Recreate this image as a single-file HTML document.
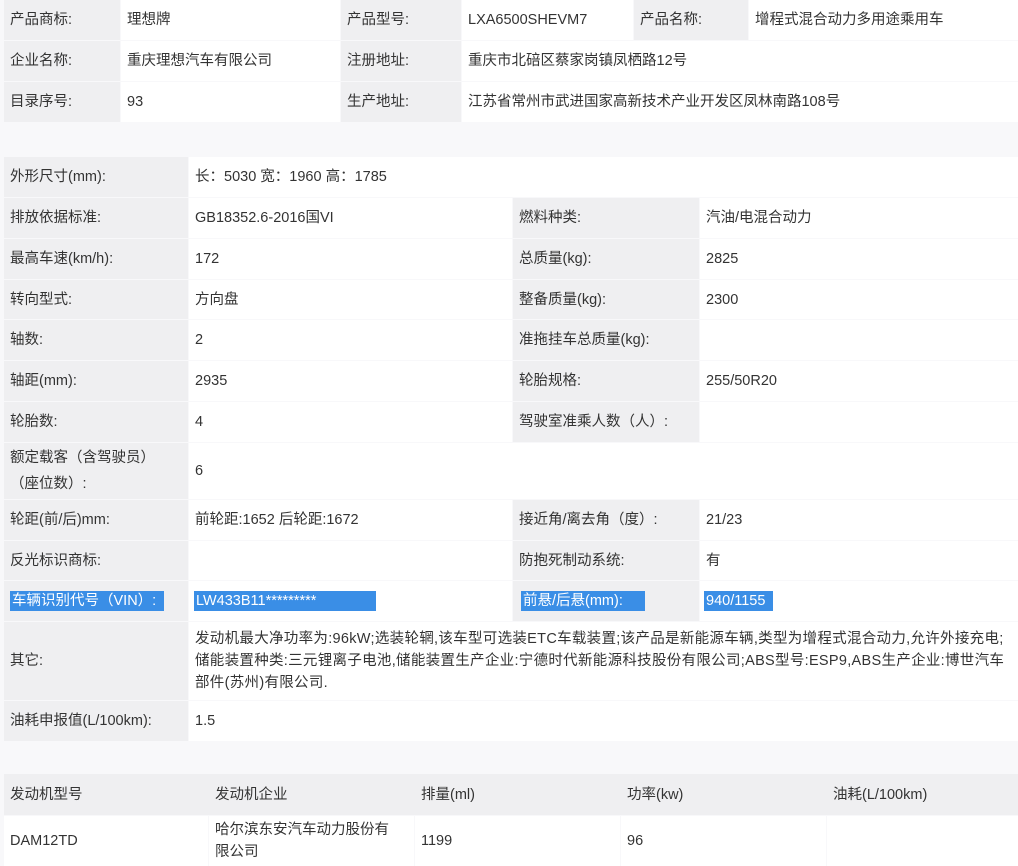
<!DOCTYPE html><html><head><meta charset="utf-8"><style>
body{margin:0;width:1018px;height:866px;background:#f8f8fa;position:relative;overflow:hidden;font-family:"Liberation Sans","Noto Sans CJK SC",sans-serif;font-size:14.5px;color:#333}
.c{position:absolute;box-sizing:border-box;padding-left:6px;display:flex;align-items:center;line-height:26px}
.l{background:#efeff1}.v{background:#fff}
.h{background:#3a8ee6;color:#fff;line-height:20px;padding:0 2px}
</style></head><body>
<div class="c l" style="left:4px;top:0;width:116px;height:40px">产品商标:</div>
<div class="c v" style="left:121px;top:0;width:219px;height:40px">理想牌</div>
<div class="c l" style="left:341px;top:0;width:120px;height:40px">产品型号:</div>
<div class="c v" style="left:462px;top:0;width:171px;height:40px">LXA6500SHEVM7</div>
<div class="c l" style="left:634px;top:0;width:114px;height:40px">产品名称:</div>
<div class="c v" style="left:749px;top:0;width:269px;height:40px">增程式混合动力多用途乘用车</div>
<div class="c l" style="left:4px;top:41px;width:116px;height:40px">企业名称:</div>
<div class="c v" style="left:121px;top:41px;width:219px;height:40px">重庆理想汽车有限公司</div>
<div class="c l" style="left:341px;top:41px;width:120px;height:40px">注册地址:</div>
<div class="c v" style="left:462px;top:41px;width:556px;height:40px">重庆市北碚区蔡家岗镇凤栖路12号</div>
<div class="c l" style="left:4px;top:82px;width:116px;height:40px">目录序号:</div>
<div class="c v" style="left:121px;top:82px;width:219px;height:40px">93</div>
<div class="c l" style="left:341px;top:82px;width:120px;height:40px">生产地址:</div>
<div class="c v" style="left:462px;top:82px;width:556px;height:40px">江苏省常州市武进国家高新技术产业开发区凤林南路108号</div>

<div class="c l" style="left:4px;top:157px;width:184px;height:40px">外形尺寸(mm):</div>
<div class="c v" style="left:189px;top:157px;width:829px;height:40px">长：5030 宽：1960 高：1785</div>

<div class="c l" style="left:4px;top:198px;width:184px;height:40px">排放依据标准:</div>
<div class="c v" style="left:189px;top:198px;width:323px;height:40px">GB18352.6-2016国VI</div>
<div class="c l" style="left:513px;top:198px;width:186px;height:40px">燃料种类:</div>
<div class="c v" style="left:700px;top:198px;width:318px;height:40px">汽油/电混合动力</div>

<div class="c l" style="left:4px;top:239px;width:184px;height:40px">最高车速(km/h):</div>
<div class="c v" style="left:189px;top:239px;width:323px;height:40px">172</div>
<div class="c l" style="left:513px;top:239px;width:186px;height:40px">总质量(kg):</div>
<div class="c v" style="left:700px;top:239px;width:318px;height:40px">2825</div>

<div class="c l" style="left:4px;top:280px;width:184px;height:39px">转向型式:</div>
<div class="c v" style="left:189px;top:280px;width:323px;height:39px">方向盘</div>
<div class="c l" style="left:513px;top:280px;width:186px;height:39px">整备质量(kg):</div>
<div class="c v" style="left:700px;top:280px;width:318px;height:39px">2300</div>

<div class="c l" style="left:4px;top:320px;width:184px;height:40px">轴数:</div>
<div class="c v" style="left:189px;top:320px;width:323px;height:40px">2</div>
<div class="c l" style="left:513px;top:320px;width:186px;height:40px">准拖挂车总质量(kg):</div>
<div class="c v" style="left:700px;top:320px;width:318px;height:40px"></div>

<div class="c l" style="left:4px;top:361px;width:184px;height:40px">轴距(mm):</div>
<div class="c v" style="left:189px;top:361px;width:323px;height:40px">2935</div>
<div class="c l" style="left:513px;top:361px;width:186px;height:40px">轮胎规格:</div>
<div class="c v" style="left:700px;top:361px;width:318px;height:40px">255/50R20</div>

<div class="c l" style="left:4px;top:402px;width:184px;height:40px">轮胎数:</div>
<div class="c v" style="left:189px;top:402px;width:323px;height:40px">4</div>
<div class="c l" style="left:513px;top:402px;width:186px;height:40px">驾驶室准乘人数（人）:</div>
<div class="c v" style="left:700px;top:402px;width:318px;height:40px"></div>

<div class="c l" style="left:4px;top:443px;width:184px;height:56px">额定载客（含驾驶员）<br>（座位数）:</div>
<div class="c v" style="left:189px;top:443px;width:829px;height:56px">6</div>

<div class="c l" style="left:4px;top:500px;width:184px;height:40px">轮距(前/后)mm:</div>
<div class="c v" style="left:189px;top:500px;width:323px;height:40px">前轮距:1652 后轮距:1672</div>
<div class="c l" style="left:513px;top:500px;width:186px;height:40px">接近角/离去角（度）:</div>
<div class="c v" style="left:700px;top:500px;width:318px;height:40px">21/23</div>

<div class="c l" style="left:4px;top:541px;width:184px;height:39px">反光标识商标:</div>
<div class="c v" style="left:189px;top:541px;width:323px;height:39px"></div>
<div class="c l" style="left:513px;top:541px;width:186px;height:39px">防抱死制动系统:</div>
<div class="c v" style="left:700px;top:541px;width:318px;height:39px">有</div>

<div class="c l" style="left:4px;top:581px;width:184px;height:40px;padding-left:6px"><span class="h" style="padding-right:8px">车辆识别代号（VIN）:</span></div>
<div class="c v" style="left:189px;top:581px;width:323px;height:40px;padding-left:5px"><span class="h" style="padding-right:60px">LW433B11*********</span></div>
<div class="c l" style="left:513px;top:581px;width:186px;height:40px;padding-left:8px"><span class="h" style="padding-right:22px">前悬/后悬(mm):</span></div>
<div class="c v" style="left:700px;top:581px;width:318px;height:40px;padding-left:4px"><span class="h" style="padding-right:8px">940/1155</span></div>

<div class="c l" style="left:4px;top:622px;width:184px;height:78px">其它:</div>
<div class="c v" style="left:189px;top:622px;width:829px;height:78px;line-height:22px;white-space:nowrap;letter-spacing:0.3px;overflow:hidden">发动机最大净功率为:96kW;选装轮辋,该车型可选装ETC车载装置;该产品是新能源车辆,类型为增程式混合动力,允许外接充电;<br>储能装置种类:三元锂离子电池,储能装置生产企业:宁德时代新能源科技股份有限公司;ABS型号:ESP9,ABS生产企业:博世汽车<br>部件(苏州)有限公司.</div>

<div class="c l" style="left:4px;top:701px;width:184px;height:40px">油耗申报值(L/100km):</div>
<div class="c v" style="left:189px;top:701px;width:829px;height:40px">1.5</div>

<div class="c l" style="left:4px;top:774px;width:1014px;height:41px"></div>
<div class="c" style="left:4px;top:774px;width:205px;height:41px">发动机型号</div>
<div class="c" style="left:209px;top:774px;width:206px;height:41px">发动机企业</div>
<div class="c" style="left:415px;top:774px;width:206px;height:41px">排量(ml)</div>
<div class="c" style="left:621px;top:774px;width:206px;height:41px">功率(kw)</div>
<div class="c" style="left:827px;top:774px;width:191px;height:41px">油耗(L/100km)</div>

<div class="c v" style="left:4px;top:816px;width:204px;height:50px">DAM12TD</div>
<div class="c v" style="left:209px;top:816px;width:205px;height:50px;line-height:22px">哈尔滨东安汽车动力股份有<br>限公司</div>
<div class="c v" style="left:415px;top:816px;width:205px;height:50px">1199</div>
<div class="c v" style="left:621px;top:816px;width:205px;height:50px">96</div>
<div class="c v" style="left:827px;top:816px;width:191px;height:50px"></div>
</body></html>
